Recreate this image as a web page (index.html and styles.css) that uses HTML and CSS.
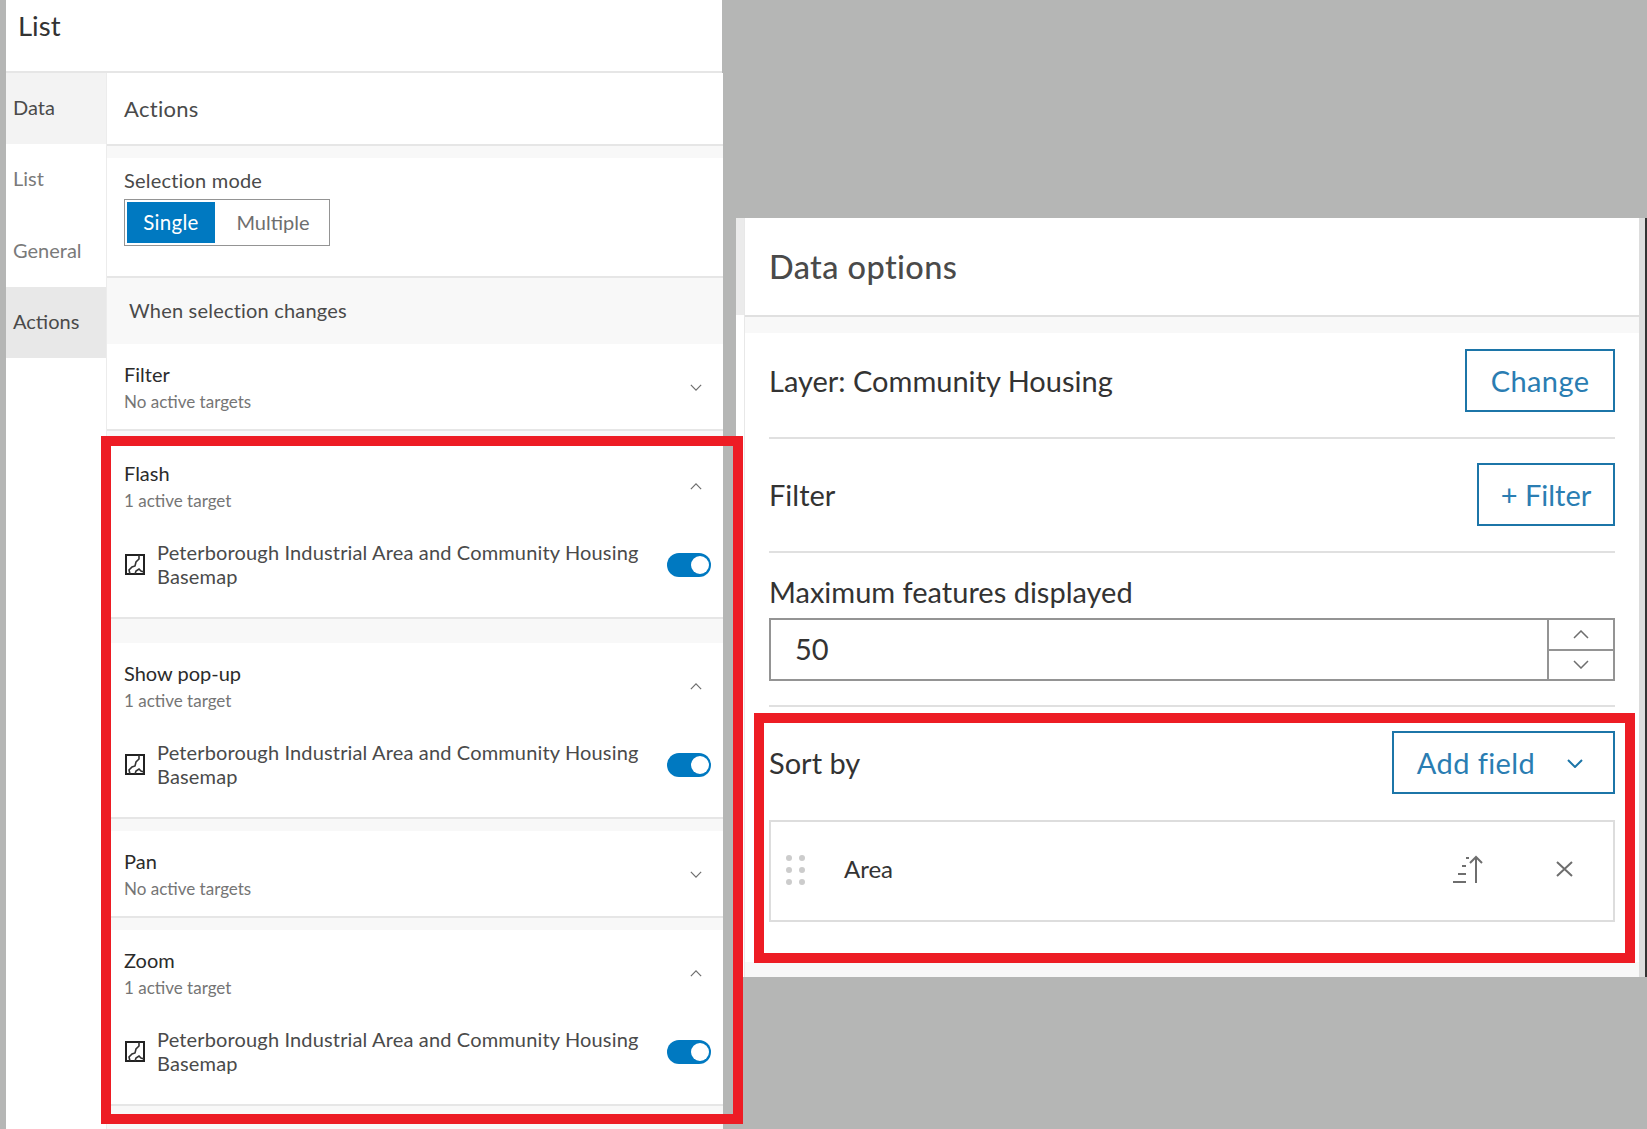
FILE: index.html
```html
<!DOCTYPE html>
<html lang="en">
<head>
  <meta charset="UTF-8">
  <title>List settings</title>
  <link rel="stylesheet" href="styles.css">
</head>
<body>
  <section class="list-panel">
    <header class="list-title">List</header>
    <div class="list-body">
      <nav class="tabs">
        <div class="tab tab-data">Data</div>
        <div class="tab">List</div>
        <div class="tab">General</div>
        <div class="tab tab-current">Actions</div>
      </nav>
      <div class="settings">
        <div class="settings-title">Actions</div>
        <div class="selection">
          <div class="selection-label">Selection mode</div>
          <div class="segments">
            <span class="segment segment-on">Single</span>
            <span class="segment">Multiple</span>
          </div>
        </div>
        <div class="changes-title">When selection changes</div>

        <div class="action">
          <div class="action-head">
            <div>
              <div class="action-name">Filter</div>
              <div class="action-sub">No active targets</div>
            </div>
            <svg class="chevron" viewBox="0 0 14 8"><path d="M1 1l6 6 6-6"/></svg>
          </div>
        </div>

        <div class="action action-open action-first">
          <div class="action-head">
            <div>
              <div class="action-name">Flash</div>
              <div class="action-sub">1 active target</div>
            </div>
            <svg class="chevron" viewBox="0 0 14 8"><path d="M1 7l6-6 6 6"/></svg>
          </div>
          <div class="target">
            <svg class="map-icon" viewBox="0 0 20 21"><path class="map-frame" d="M1 1h18v19H1z"/><path d="M14 1v4l-3 3-1 4-3 1-3 3 1 4M10 20l1-3 3-2 2 2 3 1"/></svg>
            <div class="target-name">Peterborough Industrial Area and Community Housing Basemap</div>
            <span class="toggle"><span class="knob"></span></span>
          </div>
        </div>

        <div class="action action-open">
          <div class="action-head">
            <div>
              <div class="action-name">Show pop-up</div>
              <div class="action-sub">1 active target</div>
            </div>
            <svg class="chevron" viewBox="0 0 14 8"><path d="M1 7l6-6 6 6"/></svg>
          </div>
          <div class="target">
            <svg class="map-icon" viewBox="0 0 20 21"><path class="map-frame" d="M1 1h18v19H1z"/><path d="M14 1v4l-3 3-1 4-3 1-3 3 1 4M10 20l1-3 3-2 2 2 3 1"/></svg>
            <div class="target-name">Peterborough Industrial Area and Community Housing Basemap</div>
            <span class="toggle"><span class="knob"></span></span>
          </div>
        </div>

        <div class="action">
          <div class="action-head">
            <div>
              <div class="action-name">Pan</div>
              <div class="action-sub">No active targets</div>
            </div>
            <svg class="chevron" viewBox="0 0 14 8"><path d="M1 1l6 6 6-6"/></svg>
          </div>
        </div>

        <div class="action action-open">
          <div class="action-head">
            <div>
              <div class="action-name">Zoom</div>
              <div class="action-sub">1 active target</div>
            </div>
            <svg class="chevron" viewBox="0 0 14 8"><path d="M1 7l6-6 6 6"/></svg>
          </div>
          <div class="target">
            <svg class="map-icon" viewBox="0 0 20 21"><path class="map-frame" d="M1 1h18v19H1z"/><path d="M14 1v4l-3 3-1 4-3 1-3 3 1 4M10 20l1-3 3-2 2 2 3 1"/></svg>
            <div class="target-name">Peterborough Industrial Area and Community Housing Basemap</div>
            <span class="toggle"><span class="knob"></span></span>
          </div>
        </div>
      </div>
    </div>
  </section>

  <section class="data-panel">
    <div class="data-edge"><div class="data-edge-top"></div></div>
    <div class="data-main">
      <div class="data-title">Data options</div>
      <div class="data-content">
        <div class="data-row data-row-layer">
          <span>Layer: Community Housing</span>
          <span class="outline-btn btn-change">Change</span>
        </div>
        <div class="data-row data-row-filter">
          <span>Filter</span>
          <span class="outline-btn btn-filter">+ Filter</span>
        </div>
        <div class="max-block">
          <div class="max-label">Maximum features displayed</div>
          <div class="number-input">
            <span class="number-value">50</span>
            <div class="spinner">
              <span class="spin"><svg class="chevron-big" viewBox="0 0 16 9"><path d="M1 8l7-7 7 7"/></svg></span>
              <span class="spin"><svg class="chevron-big" viewBox="0 0 16 9"><path d="M1 1l7 7 7-7"/></svg></span>
            </div>
          </div>
        </div>
        <div class="sort-head">
          <span>Sort by</span>
          <span class="outline-btn btn-add">Add field <svg class="chevron-add" viewBox="0 0 16 9"><path d="M1 1l7 7 7-7"/></svg></span>
        </div>
        <div class="sort-field">
          <svg class="drag" viewBox="0 0 19 30"><circle cx="3" cy="3" r="3"/><circle cx="16" cy="3" r="3"/><circle cx="3" cy="15" r="3"/><circle cx="16" cy="15" r="3"/><circle cx="3" cy="27" r="3"/><circle cx="16" cy="27" r="3"/></svg>
          <span class="sort-name">Area</span>
          <svg class="sort-icon" viewBox="0 0 31 28"><path d="M0 27h13M5 19h8M9 11h4M13 3h3M23 28V2M17 8l6-6 6 6"/></svg>
          <svg class="close-icon" viewBox="0 0 17 16"><path d="M1 1l15 14M16 1L1 15"/></svg>
        </div>
      </div>
    </div>
    <div class="data-rail"></div>
  </section>

  <div class="callout callout-left"></div>
  <div class="callout callout-right"></div>
</body>
</html>
```

FILE: styles.css
```css
* {
  box-sizing: border-box;
}
html, body {
  height: 100%;
}
body {
  margin: 0;
  padding-left: 6px;
  background-color: #b5b6b5;
  font-family: Lato, "Noto Sans", sans-serif;
  color: #4a4a4a;
  display: flex;
  align-items: flex-start;
  position: relative;
  overflow: hidden;
}

/* left panel */
.list-panel {
  width: 716px;
  height: 1129px;
  background-color: #fff;
  flex: none;
}
.list-title {
  height: 73px;
  padding: 8px 0 0 12px;
  border-bottom: 2px solid #e6e6e6;
  font-size: 27.5px;
  line-height: 36px;
  color: #333;
}
.list-body {
  display: flex;
  width: 717px;
  height: 1056px;
}
.tabs {
  width: 101px;
  flex: none;
  border-right: 1px solid #ececec;
}
.tab {
  height: 71.3px;
  padding-left: 7px;
  font-size: 20px;
  line-height: 69px;
  color: #7a7a7a;
}
.tab-data {
  background-color: #f3f3f3;
  color: #4a4a4a;
}
.tab-current {
  background-color: #e8e8e8;
  color: #4a4a4a;
}
.settings {
  flex: 1;
  background-color: #f8f8f8;
}
.settings-title {
  height: 73px;
  padding-left: 17px;
  border-bottom: 2px solid #e6e6e6;
  background-color: #fff;
  font-size: 22px;
  letter-spacing: .3px;
  line-height: 72px;
}
.selection {
  height: 120px;
  margin-top: 12px;
  padding: 9px 0 0 17px;
  border-bottom: 2px solid #e6e6e6;
  background-color: #fff;
}
.selection-label {
  font-size: 20px;
  letter-spacing: .2px;
  line-height: 26px;
}
.segments {
  display: flex;
  width: 206px;
  height: 47px;
  margin-top: 6px;
  padding: 2px;
  border: 1px solid #949494;
  font-size: 20px;
  color: #6e6e6e;
}
.segment {
  flex: 1;
  padding-left: 4px;
  text-align: center;
  line-height: 41px;
}
.segment-on {
  flex: none;
  width: 88px;
  padding-left: 0;
  background-color: #0079c1;
  color: #fff;
  font-size: 20.5px;
  letter-spacing: .3px;
}
.changes-title {
  height: 66px;
  padding-left: 22px;
  font-size: 20px;
  letter-spacing: .2px;
  line-height: 65px;
}
.action {
  height: 87px;
  margin-bottom: 12px;
  padding: 16px 14px 0 17px;
  border-bottom: 2px solid #e6e6e6;
  background-color: #fff;
}
.action-open {
  height: 176px;
}
.action-first {
  margin-bottom: 24px;
}
.action-head {
  display: flex;
  justify-content: space-between;
  align-items: center;
}
.action-name {
  font-size: 20px;
  line-height: 28px;
  color: #2b2b2b;
}
.action-sub {
  font-size: 17px;
  line-height: 28px;
  color: #757575;
}
.chevron {
  width: 12px;
  height: 7px;
  margin-right: 7px;
  margin-bottom: 1px;
  fill: none;
  stroke: #6e6e6e;
  stroke-width: 1.4;
}
.target {
  display: flex;
  align-items: center;
  margin-top: 25px;
  margin-right: -4px;
}
.map-icon {
  width: 20px;
  height: 21px;
  flex: none;
  margin-left: 1px;
  margin-right: 12px;
  fill: none;
  stroke: #333;
  stroke-width: 1.6;
}
.map-frame {
  stroke-width: 2;
  stroke: #222;
}
.target-name {
  width: 510px;
  font-size: 20px;
  letter-spacing: .15px;
  line-height: 24px;
}
.toggle {
  width: 44px;
  height: 24px;
  margin-top: 2px;
  flex: none;
  display: flex;
  justify-content: flex-end;
  align-items: center;
  padding-right: 2px;
  border-radius: 12px;
  background-color: #0079c1;
}
.knob {
  width: 18px;
  height: 18px;
  border-radius: 50%;
  background-color: #fff;
}

/* right panel */
.data-panel {
  display: flex;
  width: 911px;
  height: 759px;
  margin-top: 218px;
  margin-left: 14px;
  flex: none;
  border-right: 2px solid #333;
  background-color: #fff;
}
.data-edge {
  width: 8px;
  flex: none;
}
.data-edge-top {
  height: 97px;
  background-color: #ebebeb;
}
.data-main {
  flex: 1;
  display: flex;
  flex-direction: column;
  border-left: 1px solid #e8e8e8;
  background-color: #f8f8f8;
}
.data-rail {
  width: 6px;
  flex: none;
  background-color: #ddd;
}
.data-title {
  height: 99px;
  padding-left: 24px;
  border-bottom: 2px solid #e0e0e0;
  background-color: #fff;
  font-size: 32.5px;
  font-weight: 500;
  letter-spacing: .4px;
  line-height: 97px;
}
.data-content {
  height: 629px;
  margin-top: 16px;
  padding: 0 24px 0 24px;
  background-color: #fff;
  font-size: 29px;
  color: #333;
}
.data-row {
  display: flex;
  justify-content: space-between;
  align-items: center;
  border-bottom: 2px solid #e0e0e0;
}
.data-row-layer {
  height: 106px;
  padding-bottom: 9px;
}
.data-row-filter {
  height: 114px;
  padding-bottom: 2px;
}
.outline-btn {
  display: flex;
  justify-content: center;
  align-items: center;
  height: 63px;
  border: 2px solid #1c75a8;
  color: #2a7db2;
  letter-spacing: .4px;
}
.btn-change {
  width: 150px;
}
.btn-filter {
  width: 138px;
  letter-spacing: 0;
}
.max-block {
  height: 154px;
  padding-top: 21px;
  border-bottom: 2px solid #e0e0e0;
}
.max-label {
  line-height: 36px;
}
.number-input {
  display: flex;
  justify-content: space-between;
  height: 63px;
  margin-top: 8px;
  border: 2px solid #949494;
}
.number-value {
  padding-left: 24px;
  line-height: 58px;
}
.spinner {
  width: 66px;
  display: flex;
  flex-direction: column;
  border-left: 2px solid #949494;
}
.spin {
  flex: 1;
  display: flex;
  justify-content: center;
  align-items: center;
}
.spin + .spin {
  border-top: 2px solid #949494;
}
.chevron-big {
  width: 16px;
  height: 9px;
  fill: none;
  stroke: #6e6e6e;
  stroke-width: 1.5;
}
.sort-head {
  display: flex;
  justify-content: space-between;
  align-items: center;
  height: 64px;
  margin-top: 23px;
}
.btn-add {
  width: 223px;
  padding-right: 7px;
  gap: 32px;
}
.chevron-add {
  width: 16px;
  height: 9px;
  margin-top: 3px;
  fill: none;
  stroke: #1c75a8;
  stroke-width: 2;
}
.sort-field {
  display: flex;
  align-items: center;
  height: 102px;
  margin-top: 26px;
  padding-left: 15px;
  border: 2px solid #ddd;
}
.drag {
  width: 19px;
  height: 30px;
  margin-bottom: 3px;
  fill: #ccc;
}
.sort-name {
  width: 609px;
  margin-left: 39px;
  margin-bottom: 5px;
  font-size: 24px;
}
.sort-icon {
  width: 31px;
  height: 28px;
  margin-bottom: 4px;
  fill: none;
  stroke: #6e6e6e;
  stroke-width: 2;
}
.close-icon {
  width: 17px;
  height: 16px;
  margin-left: 72px;
  margin-bottom: 4px;
  fill: none;
  stroke: #6e6e6e;
  stroke-width: 2;
}

/* red highlight boxes drawn over the screenshot */
.callout {
  position: absolute;
  border: 10px solid #ed1c24;
}
.callout-left {
  left: 101px;
  top: 436px;
  width: 642px;
  height: 688px;
}
.callout-right {
  left: 754px;
  top: 713px;
  width: 881px;
  height: 250px;
}
```
